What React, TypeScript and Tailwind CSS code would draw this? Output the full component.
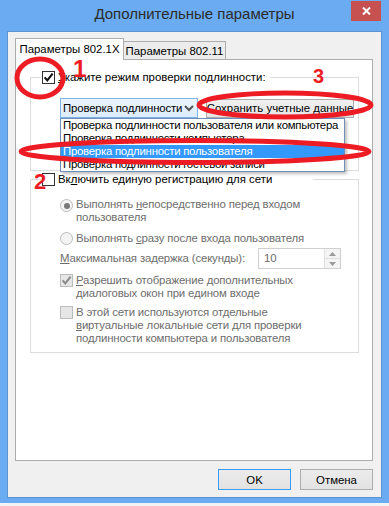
import React from "react";

function CheckBox({ checked = false, disabled = false }: { checked?: boolean; disabled?: boolean }) {
  return (
    <span
      className={
        disabled
          ? "w-[13px] h-[13px] shrink-0 border border-[#bcbcbc] bg-[#e6e6e6] flex items-center justify-center"
          : "w-[13px] h-[13px] shrink-0 border border-[#333333] bg-white flex items-center justify-center"
      }
    >
      {checked && (
        <svg width="11" height="11" viewBox="0 0 11 11">
          <path d="M1.6 5.4 L4.3 8.3 L9.6 1.6" fill="none" stroke={disabled ? "#8c8c8c" : "#111111"} strokeWidth="2.1" />
        </svg>
      )}
    </span>
  );
}

function Radio({ checked = false }: { checked?: boolean }) {
  return (
    <span className="w-[13px] h-[13px] shrink-0 rounded-full border border-[#bcbcbc] bg-[#f4f4f4] flex items-center justify-center">
      {checked && <span className="w-[6px] h-[6px] rounded-full bg-[#777777]" />}
    </span>
  );
}

export default function App() {
  return (
    <div className="w-[389px] h-[506px] bg-[#f3f3f3] relative overflow-hidden font-['Liberation_Sans',Arial,sans-serif] text-[11.4px] text-black">
      {/* window */}
      <div className="w-[389px] h-[503px] bg-[#6aabf2] flex flex-col px-[7px] pb-[5px]">
        {/* title bar */}
        <div className="h-[31px] shrink-0 flex items-start">
          <div className="w-[31px]" />
          <div className="flex-1 text-center text-[15px] leading-[18px] pt-[5px] text-[#2b2b2b] whitespace-nowrap">Дополнительные параметры</div>
          <div className="w-[30px] h-[20px] mt-[1px] mr-[1px] bg-[#c75050] flex items-center justify-center">
            <svg width="9" height="8" viewBox="0 0 9 8">
              <path d="M1 0.5 L8 7.5 M8 0.5 L1 7.5" stroke="#ffffff" strokeWidth="2" />
            </svg>
          </div>
        </div>

        {/* client */}
        <div className="flex-1 border border-[#5a92d4] bg-[#f0f0f0] flex flex-col pl-[7px] pr-[8px] pt-[6px]">
          {/* tabs */}
          <div className="flex items-end h-[21px] leading-[14px] whitespace-nowrap">
            <div className="w-[109px] h-[22px] -mb-px relative z-10 bg-white border border-b-0 border-[#acacac] text-center pt-[3px]">
              Параметры 802.1X
            </div>
            <div className="w-[102px] h-[18px] bg-[#ececec] border border-b-0 border-l-0 border-[#acacac] text-center pt-[2px]">
              Параметры 802.11
            </div>
          </div>

          {/* panel */}
          <div className="h-[402px] w-[358px] bg-white border border-[#acacac] pl-[14px] pr-[13px] pt-[10px]">
            {/* group 1 */}
            <fieldset className="border border-[#dcdcdc]">
              <legend className="ml-[10px] px-[1px]">
                <span className="flex items-center h-[14px] gap-[3px] leading-[14px] whitespace-nowrap">
                  <CheckBox checked />
                  <span className="pr-[3px]">
                    <u>У</u>кажите режим проверки подлинности:
                  </span>
                </span>
              </legend>
              <div className="pl-[29px] mt-[14px] flex items-center">
                <div className="relative w-[138px] h-[20px] border border-[#7eb4ea] bg-gradient-to-b from-[#ecf4fc] to-[#dcecfc] flex items-center pl-[2px] leading-[14px] whitespace-nowrap">
                  <span className="flex-1 tracking-[-0.15px]">Проверка подлинности</span>
                  <svg width="10" height="7" viewBox="0 0 10 7" className="mr-[3px]">
                    <path d="M1 1 L5 5 L9 1" fill="none" stroke="#555555" strokeWidth="2" />
                  </svg>
                  {/* open dropdown list */}
                  <div className="absolute left-[-1px] top-[19px] z-20 w-[285px] h-[54px] bg-white border border-[#6f8fb8] shadow-[2px_2px_3px_rgba(0,0,0,0.25)] flex flex-col leading-[13px] tracking-[-0.25px] overflow-hidden">
                    <div className="h-[13px] pl-[2px]">Проверка подлинности пользователя или компьютера</div>
                    <div className="h-[13px] pl-[2px]">Проверка подлинности компьютера</div>
                    <div className="h-[13px] pl-[2px] bg-[#3399ff] text-white">Проверка подлинности пользователя</div>
                    <div className="h-[13px] pl-[2px]">Проверка подлинности гостевой записи</div>
                  </div>
                </div>
                <div className="ml-[8px] w-[148px] h-[19px] border border-[#acacac] bg-gradient-to-b from-[#f0f0f0] to-[#e5e5e5] flex items-center justify-center leading-[14px] whitespace-nowrap">
                  <span>
                    Сохранить учетные <u>д</u>анные
                  </span>
                </div>
              </div>
              <div className="h-[52px]" />
            </fieldset>

            {/* group 2 */}
            <fieldset className="border border-[#dcdcdc] mt-[1px]">
              <legend className="ml-[10px] px-[1px]">
                <span className="flex items-center w-[270px] h-[14px] gap-[3px] leading-[14px] whitespace-nowrap">
                  <CheckBox />
                  <span>
                    Вк<u>л</u>ючить единую регистрацию для сети
                  </span>
                </span>
              </legend>
              <div className="pl-[29px] pt-[12px] pb-[7px] flex flex-col text-[#6d6d6d] leading-[13px] whitespace-nowrap tracking-[-0.15px]">
                <div className="flex gap-[3px]">
                  <span className="mt-[1px]">
                    <Radio checked />
                  </span>
                  <div>
                    Выполнять <u>н</u>епосредственно перед входом
                    <br />
                    пользователя
                  </div>
                </div>
                <div className="flex gap-[3px] mt-[8px]">
                  <span>
                    <Radio />
                  </span>
                  <div>
                    Выполнять <u>с</u>разу после входа пользователя
                  </div>
                </div>
                <div className="flex items-center mt-[3px]">
                  <div className="w-[198px]">
                    <u>М</u>аксимальная задержка (секунды):
                  </div>
                  <div className="w-[83px] h-[21px] border border-[#d0d0d0] bg-white flex">
                    <div className="flex-1 pl-[5px] flex items-center">10</div>
                    <div className="w-[16px] flex flex-col border-l border-[#e0e0e0] bg-[#f4f4f4]">
                      <div className="flex-1 flex items-center justify-center border-b border-[#e0e0e0]">
                        <svg width="7" height="4" viewBox="0 0 7 4">
                          <path d="M0 4 L3.5 0 L7 4 Z" fill="#9a9a9a" />
                        </svg>
                      </div>
                      <div className="flex-1 flex items-center justify-center">
                        <svg width="7" height="4" viewBox="0 0 7 4">
                          <path d="M0 0 L3.5 4 L7 0 Z" fill="#9a9a9a" />
                        </svg>
                      </div>
                    </div>
                  </div>
                </div>
                <div className="flex gap-[3px] mt-[5px]">
                  <CheckBox checked disabled />
                  <div>
                    <u>Р</u>азрешить отображение дополнительных
                    <br />
                    диалоговых окон при едином входе
                  </div>
                </div>
                <div className="flex gap-[3px] mt-[6px]">
                  <CheckBox disabled />
                  <div>
                    В этой сети используются отдельные
                    <br />
                    <u>в</u>иртуальные локальные сети для проверки
                    <br />
                    подлинности компьютера и пользователя
                  </div>
                </div>
              </div>
            </fieldset>
          </div>

          {/* buttons */}
          <div className="flex justify-end gap-[9px] mt-[8px] leading-[14px]">
            <div className="w-[73px] h-[21px] border border-[#3c9cf0] bg-gradient-to-b from-[#ececec] to-[#e2e2e2] flex items-center justify-center">OK</div>
            <div className="w-[73px] h-[21px] border border-[#adadad] bg-gradient-to-b from-[#ececec] to-[#e2e2e2] flex items-center justify-center">Отмена</div>
          </div>
        </div>
      </div>

      {/* red annotations */}
      <svg className="absolute left-0 top-0 pointer-events-none z-30" width="389" height="506" viewBox="0 0 389 506">
        <ellipse cx="40" cy="78" rx="23" ry="19" fill="none" stroke="#ed1c24" strokeWidth="5" />
        <ellipse cx="285" cy="105" rx="86" ry="12" fill="none" stroke="#ed1c24" strokeWidth="5" />
        <ellipse cx="195" cy="151.5" rx="174" ry="11" fill="none" stroke="#ed1c24" strokeWidth="5" />
      </svg>
      <span className="absolute left-[73px] top-[57px] z-30 text-[24px] leading-[24px] font-bold text-[#ed1c24]">1</span>
      <span className="absolute left-[313px] top-[66px] z-30 text-[20px] leading-[20px] font-bold text-[#ed1c24]">3</span>
      <span className="absolute left-[34px] top-[171px] z-30 text-[22px] leading-[22px] font-bold text-[#ed1c24]">2</span>
    </div>
  );
}
